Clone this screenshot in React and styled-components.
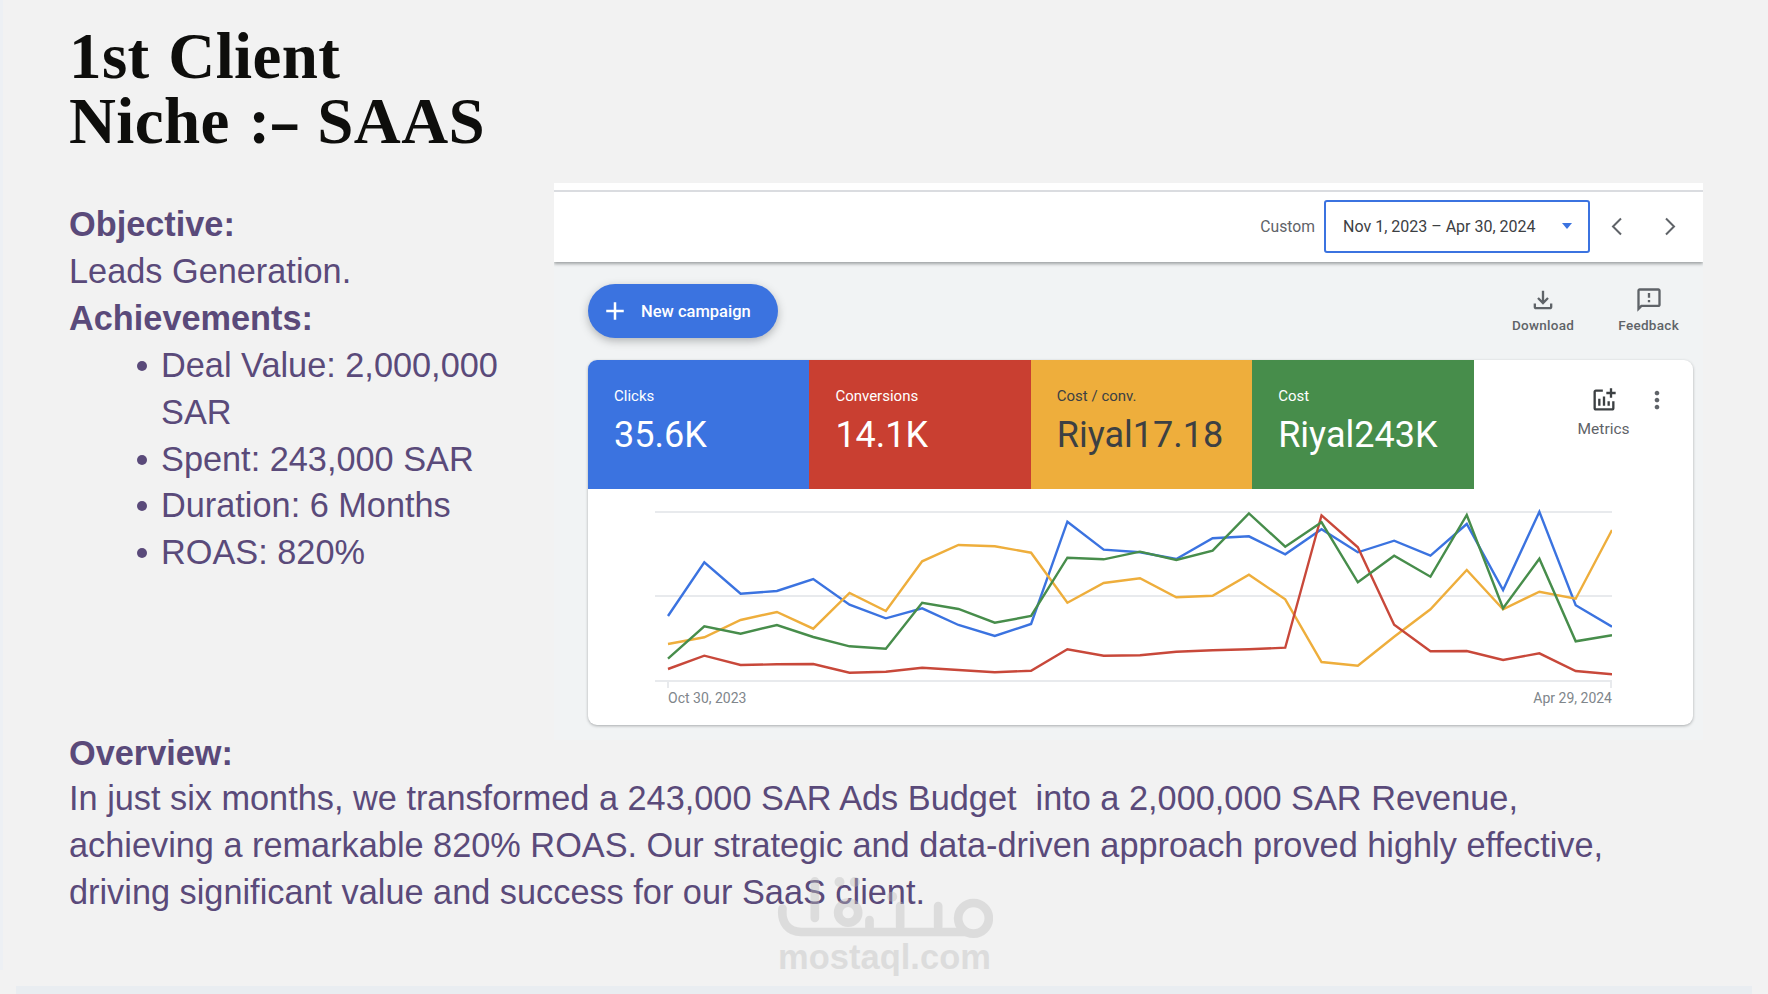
import { createGlobalStyle, styled } from 'styled-components';
import { MdOutlineFileDownload, MdOutlineFeedback, MdOutlineAddchart, MdMoreVert, MdAdd } from 'react-icons/md';

const metrics = [
  { label: 'Clicks', value: '35.6K', bg: '#3b73e0', color: '#fff' },
  { label: 'Conversions', value: '14.1K', bg: '#c93f31', color: '#fff' },
  { label: 'Cost / conv.', value: 'Riyal17.18', bg: '#eeae3c', color: '#3c4043' },
  { label: 'Cost', value: 'Riyal243K', bg: '#478d4b', color: '#fff' },
];

// y of each line in page pixels minus chart top, 27 points per series
const toY = (v) => v / 3 - 10;
const series = [
  { color: '#3b73e0', points: [378, 217, 311, 303, 267, 344, 385, 355, 405, 438, 402, 95, 179, 187, 207, 145, 139, 193, 118, 187, 152, 197, 102, 300, 65, 346, 410] },
  { color: '#eeae3c', points: [462, 442, 390, 366, 416, 309, 363, 214, 165, 169, 188, 338, 279, 265, 322, 317, 254, 328, 516, 527, 440, 358, 240, 358, 305, 326, 120] },
  { color: '#c8483a', points: [537, 497, 525, 523, 522, 548, 545, 533, 540, 547, 542, 478, 497, 496, 485, 481, 478, 473, 76, 172, 404, 484, 483, 510, 490, 543, 553] },
  { color: '#478d4b', points: [506, 409, 431, 405, 441, 469, 476, 338, 357, 398, 378, 203, 208, 185, 210, 182, 70, 170, 97, 277, 197, 260, 75, 355, 206, 454, 436] },
];

const polyline = (points) =>
  points.map((v, i) => `${13 + (i * 944) / 26},${toY(v).toFixed(1)}`).join(' ');

const App = () => {
  return (
    <Page>
      <GlobalStyle />
      <Top>
        <Intro>
          <Title>1st Client<br />Niche :<Dash>-</Dash> SAAS</Title>
          <Info>
            <Strong>Objective:</Strong>
            <Line>Leads Generation.</Line>
            <Strong>Achievements:</Strong>
            <Bullets>
              <li>Deal Value: 2,000,000 SAR</li>
              <li>Spent: 243,000 SAR</li>
              <li>Duration: 6 Months</li>
              <li>ROAS: 820%</li>
            </Bullets>
          </Info>
        </Intro>
        <Panel>
          <Toolbar>
            <Custom>Custom</Custom>
            <DateBox>
              <span>Nov 1, 2023 – Apr 30, 2024</span>
              <Caret />
            </DateBox>
            <NavButton>
              <svg width="13" height="19" viewBox="0 0 13 19"><path d="M11 1.5 3 9.5l8 8" fill="none" stroke="#5f6368" strokeWidth="2" /></svg>
            </NavButton>
            <NavButton>
              <svg width="13" height="19" viewBox="0 0 13 19"><path d="M2 1.5l8 8-8 8" fill="none" stroke="#5f6368" strokeWidth="2" /></svg>
            </NavButton>
          </Toolbar>
          <PanelBody>
            <Actions>
              <NewCampaign>
                <MdAdd size={30} />
                New campaign
              </NewCampaign>
              <IconActions>
                <IconAction>
                  <MdOutlineFileDownload size={28} />
                  Download
                </IconAction>
                <IconAction>
                  <MdOutlineFeedback size={28} />
                  Feedback
                </IconAction>
              </IconActions>
            </Actions>
            <Card>
              <CardHead>
                <Tiles>
                  {metrics.map((m) => (
                    <Tile key={m.label} $bg={m.bg} $color={m.color}>
                      <TileLabel>{m.label}</TileLabel>
                      <TileValue>{m.value}</TileValue>
                    </Tile>
                  ))}
                </Tiles>
                <MetricsSide>
                  <MetricsButton>
                    <MdOutlineAddchart size={28} />
                    Metrics
                  </MetricsButton>
                  <MoreButton><MdMoreVert size={28} /></MoreButton>
                </MetricsSide>
              </CardHead>
              <ChartWrap>
                <ChartSvg width="957" height="190" viewBox="0 0 957 190">
                  <g stroke="#e8eaed" strokeWidth="2">
                    <line x1="0" x2="957" y1="12" y2="12" />
                    <line x1="0" x2="957" y1="96" y2="96" />
                    <line x1="0" x2="957" y1="181" y2="181" />
                    <line x1="13" x2="13" y1="181" y2="188" />
                    <line x1="956" x2="956" y1="181" y2="188" />
                  </g>
                  {series.map((s) => (
                    <polyline key={s.color} points={polyline(s.points)} fill="none" stroke={s.color} strokeWidth="2.4" strokeLinejoin="miter" />
                  ))}
                </ChartSvg>
                <ChartDates>
                  <span>Oct 30, 2023</span>
                  <span>Apr 29, 2024</span>
                </ChartDates>
              </ChartWrap>
            </Card>
          </PanelBody>
        </Panel>
      </Top>
      <Overview>
        <OverviewTitle>Overview:</OverviewTitle>
        <OverviewText>
          In just six months, we transformed a 243,000 SAR Ads Budget&nbsp; into a 2,000,000 SAR Revenue,<br />
          achieving a remarkable 820% ROAS. Our strategic and data-driven approach proved highly effective,<br />
          driving significant value and success for our SaaS client.
        </OverviewText>
      </Overview>
      <Watermark>
        <svg width="217" height="65" viewBox="20 15 650 195">
          <g fill="none" stroke="#bdbdbd" strokeWidth="26" strokeLinecap="round" strokeLinejoin="round">
            <circle cx="612" cy="145" r="46" />
            <path d="M590 186H95C58 186 34 160 39 116" />
            <path d="M506 108v62M392 108v62" />
            <circle cx="236" cy="128" r="30" />
            <path d="M136 34v110M300 150v30" />
          </g>
          <g fill="#bdbdbd">
            <circle cx="210" cy="36" r="15" />
            <circle cx="256" cy="36" r="15" />
            <circle cx="368" cy="80" r="15" />
          </g>
        </svg>
        <WatermarkText>mostaql.com</WatermarkText>
      </Watermark>
    </Page>
  );
};

const GlobalStyle = createGlobalStyle`
  html, body {
    margin: 0;
    padding: 0;
    background: #f2f2f2;
  }
  * {
    box-sizing: border-box;
  }
`;

const Page = styled.div`
  position: relative;
  width: 1768px;
  height: 994px;
  overflow: hidden;
  padding-left: 69px;
  background:
    linear-gradient(#e9edf1, #e9edf1) left 16px bottom / 1736px 8px no-repeat,
    linear-gradient(#edf0f4, #edf0f4) left top / 3px 970px no-repeat,
    #f2f2f2;
  font-family: "Liberation Sans", Arial, sans-serif;
  color: #5a4a7a;
`;

const Top = styled.div`
  display: flex;
  height: 740px;
`;

const Intro = styled.div`
  width: 485px;
`;

const Title = styled.h1`
  margin: 0;
  padding-top: 24px;
  font-family: "Liberation Serif", "Times New Roman", serif;
  font-size: 65px;
  line-height: 65px;
  letter-spacing: 0.4px;
  word-spacing: 2px;
  font-weight: 700;
  color: #0e0e0c;
`;

const Dash = styled.span`
  display: inline-block;
  margin: 0 3px;
  transform: scaleX(1.5);
`;

const Info = styled.div`
  margin-top: 47px;
  font-size: 34.3px;
  line-height: 46.9px;
`;

const Strong = styled.div`
  font-weight: 700;
`;

const Line = styled.div``;

const Bullets = styled.ul`
  margin: 0;
  padding: 0 20px 0 68px;
  list-style: none;

  li {
    display: flex;
  }

  li::before {
    content: '';
    flex: none;
    width: 10px;
    height: 10px;
    margin: 19px 14px 0 0;
    border-radius: 50%;
    background: #5a4a7a;
  }
`;

const Panel = styled.div`
  margin-top: 183px;
  width: 1149px;
  height: 557px;
  overflow: hidden;
  background: #f1f3f4;
`;

const Toolbar = styled.div`
  display: flex;
  align-items: center;
  justify-content: flex-end;
  height: 79px;
  padding: 7px 20px 0 0;
  background: #fff;
  background-image: linear-gradient(#dadce0, #dadce0);
  background-size: 100% 2px;
  background-position: 0 7px;
  background-repeat: no-repeat;
  box-shadow: 0 2px 3px rgba(60, 64, 67, 0.45);
`;

const Custom = styled.span`
  margin-right: 9px;
  font-family: Roboto, sans-serif;
  font-size: 15.7px;
  color: #5f6368;
`;

const DateBox = styled.div`
  display: flex;
  align-items: center;
  justify-content: space-between;
  width: 266px;
  height: 53px;
  margin-right: 20px;
  padding: 0 16px 0 17px;
  border: 2px solid #3b73e0;
  border-radius: 3px;
  font-family: Roboto, sans-serif;
  font-size: 16px;
  color: #3c4043;
`;

const Caret = styled.span`
  width: 0;
  height: 0;
  border-left: 5.5px solid transparent;
  border-right: 5.5px solid transparent;
  border-top: 6px solid #3b73e0;
`;

const NavButton = styled.div`
  display: flex;
  align-items: center;
  justify-content: center;
  width: 13px;
  margin-right: 41px;

  &:last-child {
    margin-right: 6px;
  }
`;

const PanelBody = styled.div`
  padding: 22px 10px 0 34px;
`;

const Actions = styled.div`
  display: flex;
  justify-content: space-between;
  height: 76px;
`;

const NewCampaign = styled.div`
  display: flex;
  align-items: center;
  gap: 11px;
  width: 190px;
  height: 54px;
  padding-left: 12px;
  border-radius: 27px;
  background: #3b73e0;
  box-shadow: 0 3px 8px rgba(60, 64, 67, 0.35);
  font-family: Roboto, sans-serif;
  font-size: 16.5px;
  font-weight: 500;
  color: #fff;
`;

const IconActions = styled.div`
  display: flex;
  gap: 44px;
  padding: 2px 14px 0 0;
`;

const IconAction = styled.div`
  display: flex;
  flex-direction: column;
  align-items: center;
  gap: 3px;
  font-family: Roboto, sans-serif;
  font-size: 13.5px;
  font-weight: 500;
  letter-spacing: 0.3px;
  color: #5f6368;
`;

const Card = styled.div`
  height: 365px;
  background: #fff;
  border-radius: 9px;
  box-shadow: 0 1px 3px rgba(60, 64, 67, 0.4);
  overflow: hidden;
`;

const CardHead = styled.div`
  display: flex;
  height: 129px;
`;

const Tiles = styled.div`
  display: grid;
  grid-template-columns: repeat(4, 221.4px);
`;

const Tile = styled.div`
  padding: 27px 0 0 26px;
  background: ${(p) => p.$bg};
  color: ${(p) => p.$color};
  font-family: Roboto, sans-serif;
`;

const TileLabel = styled.div`
  font-size: 15px;
  line-height: 18px;
`;

const TileValue = styled.div`
  margin-top: 8px;
  font-size: 36px;
  line-height: 44px;
`;

const MetricsSide = styled.div`
  position: relative;
  flex: 1;
  display: flex;
  padding: 26px 0 0 104px;
`;

const MetricsButton = styled.div`
  display: flex;
  flex-direction: column;
  align-items: center;
  gap: 6px;
  font-family: Roboto, sans-serif;
  font-size: 15.5px;
  color: #5f6368;
  svg {
    color: #3c4043;
  }
`;

const MoreButton = styled.div`
  position: absolute;
  top: 26px;
  right: 22px;
  color: #5f6368;
`;

const ChartWrap = styled.div`
  padding: 11px 81px 0 67px;
`;

const ChartSvg = styled.svg`
  display: block;
`;

const ChartDates = styled.div`
  display: flex;
  justify-content: space-between;
  padding-left: 13px;
  font-family: Roboto, sans-serif;
  font-size: 14px;
  line-height: 16px;
  color: #80868b;
`;

const Overview = styled.div`
  font-size: 34.3px;
`;

const OverviewTitle = styled.div`
  height: 26px;
  margin-bottom: 9px;
  font-weight: 700;
  line-height: 26px;
`;

const OverviewText = styled.div`
  line-height: 47.2px;
`;

const Watermark = styled.div`
  position: absolute;
  left: 776px;
  top: 875px;
  width: 217px;
  display: flex;
  flex-direction: column;
  align-items: center;
  opacity: 0.4;
`;

const WatermarkText = styled.div`
  margin-top: -4px;
  font-size: 34.5px;
  line-height: 42px;
  font-weight: 700;
  color: #bdbdbd;
`;

export default App;
